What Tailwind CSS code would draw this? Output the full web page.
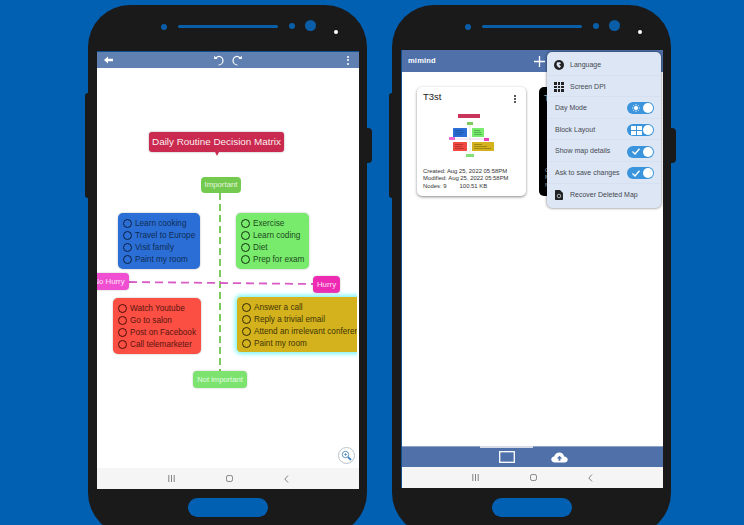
<!DOCTYPE html>
<html>
<head>
<meta charset="utf-8">
<script src="https://cdn.jsdelivr.net/npm/@tailwindcss/browser@4"></script>
</head>
<body class="m-0">
<div class="w-[744px] h-[525px] overflow-hidden bg-[#0260b3] flex items-start pl-[88px] gap-[25px] font-['Liberation_Sans',Arial,sans-serif]">

  <!-- Phone 1 -->
  <div class="relative w-[279px] h-[530px] mt-[5px] shrink-0 rounded-[42px] bg-[#1a1a1a] flex flex-col">
    <div class="absolute left-[-3px] top-[88px] w-[3px] h-[105px] bg-[#1a1a1a] rounded-l-sm"></div>
    <div class="absolute right-[-5px] top-[123px] w-[5px] h-[35px] bg-[#1a1a1a] rounded-r-sm"></div>
    <div class="h-[46px] relative shrink-0">
      <div class="absolute left-[73px] top-[19px] w-[6px] h-[6px] rounded-full bg-[#0a5ea8]"></div>
      <div class="absolute left-[90px] top-[20px] w-[100px] h-[3px] rounded-full bg-[#0a5ea8]"></div>
      <div class="absolute left-[201px] top-[18px] w-[6px] h-[6px] rounded-full bg-[#0a5ea8]"></div>
      <div class="absolute left-[217px] top-[15px] w-[11px] h-[11px] rounded-full bg-[#0a5ea8]"></div>
      <div class="absolute left-[246px] top-[25px] w-[4px] h-[4px] rounded-full bg-white"></div>
    </div>
    <div class="mx-[9px] w-[262px] h-[438px] shrink-0 bg-white flex flex-col overflow-hidden border-t border-[#0f4f8f]">
      <div class="relative h-[16px] shrink-0 bg-[#6080b2] flex items-center justify-between pl-[7px] pr-[10px]">
        <svg width="9" height="8" viewBox="0 0 9 8"><path d="M0 4 4 0.5V2.7H9V5.3H4V7.5Z" fill="#fff"/></svg>
        <div class="absolute left-[116px] top-[3px] flex gap-[8px]">
          <svg width="11" height="11" viewBox="0 0 11 11" fill="none" stroke="#fff" stroke-width="1.2"><path d="M3 3C6-.2 10 2 10 5.500C10 8 8 10 5.500 10"/><path d="M1.200 1V4.300H4.500" fill="#fff" stroke="none" transform="translate(0 -.2)"/></svg>
          <svg width="11" height="11" viewBox="0 0 11 11" fill="none" stroke="#fff" stroke-width="1.2"><path d="M8 3C5-.2 1 2 1 5.500C1 8 3 10 5.500 10"/><path d="M9.800 1V4.300H6.500" fill="#fff" stroke="none" transform="translate(0 -.2)"/></svg>
        </div>
        <div class="flex flex-col gap-[1.500px] items-center w-[2px]">
          <span class="w-[2px] h-[2px] rounded-full bg-white"></span><span class="w-[2px] h-[2px] rounded-full bg-white"></span><span class="w-[2px] h-[2px] rounded-full bg-white"></span>
        </div>
      </div>
      <div class="relative h-[400px] w-[260px] overflow-hidden shrink-0">
        <svg class="absolute left-0 top-0" width="260" height="400" fill="none">
          <path d="M123 125V303" stroke="#7cc95e" stroke-width="2" stroke-dasharray="7 4"/>
          <path d="M32 214L216 216" stroke="#d95cc6" stroke-width="1.800" stroke-dasharray="8 5"/>
        </svg>
        <div class="absolute left-[52px] top-[64px] w-[135px] h-[20px] rounded-[3px] bg-[#cb2a50] shadow-[0_0_2px_#0006] text-white/95 text-[9.900px] leading-[20px] text-center whitespace-nowrap">Daily Routine Decision Matrix</div>
        <div class="absolute left-[118px] top-[84px] w-0 h-0 border-x-[2px] border-x-transparent border-t-[4px] border-t-[#cb2a50]"></div>
        <div class="absolute left-[104px] top-[109px] w-[40px] h-[16px] rounded-[4px] bg-[#74c94f] text-white/80 text-[7.800px] leading-[16px] text-center">Important</div>
        <div class="absolute left-[96px] top-[303px] w-[54px] h-[17px] rounded-[4px] bg-[#7ce36f] shadow-[0_0_2px_#0004] text-white/80 text-[7.600px] leading-[17px] text-center whitespace-nowrap">Not important</div>
        <div class="absolute left-[-8px] top-[205px] w-[40px] h-[17px] rounded-[4px] bg-[#ef4fd0] shadow-[0_0_2px_#0004] text-white/85 text-[7.800px] leading-[17px] text-center whitespace-nowrap">No Hurry</div>
        <div class="absolute left-[216px] top-[208px] w-[27px] h-[17px] rounded-[4px] bg-[#ee2ab3] shadow-[0_0_2px_#0004] text-white/85 text-[7.800px] leading-[17px] text-center">Hurry</div>

        <div class="absolute left-[21px] top-[145px] w-[82px] h-[56px] rounded-[5px] bg-[#2b6fd6] shadow-[0_0_2px_#0005] pl-[5px] pt-[6px] flex flex-col gap-[3px] text-[8.200px] leading-[9px] text-[#0f2c55]">
          <div class="flex items-center gap-[3px] whitespace-nowrap"><span class="w-[9px] h-[9px] rounded-full border border-[#0b2142] shrink-0"></span>Learn cooking</div>
          <div class="flex items-center gap-[3px] whitespace-nowrap"><span class="w-[9px] h-[9px] rounded-full border border-[#0b2142] shrink-0"></span>Travel to Europe</div>
          <div class="flex items-center gap-[3px] whitespace-nowrap"><span class="w-[9px] h-[9px] rounded-full border border-[#0b2142] shrink-0"></span>Visit family</div>
          <div class="flex items-center gap-[3px] whitespace-nowrap"><span class="w-[9px] h-[9px] rounded-full border border-[#0b2142] shrink-0"></span>Paint my room</div>
        </div>
        <div class="absolute left-[139px] top-[145px] w-[73px] h-[56px] rounded-[5px] bg-[#78ea6c] shadow-[0_0_2px_#0005] pl-[5px] pt-[6px] flex flex-col gap-[3px] text-[8.200px] leading-[9px] text-[#1c4a1c]">
          <div class="flex items-center gap-[3px] whitespace-nowrap"><span class="w-[9px] h-[9px] rounded-full border border-[#103010] shrink-0"></span>Exercise</div>
          <div class="flex items-center gap-[3px] whitespace-nowrap"><span class="w-[9px] h-[9px] rounded-full border border-[#103010] shrink-0"></span>Learn coding</div>
          <div class="flex items-center gap-[3px] whitespace-nowrap"><span class="w-[9px] h-[9px] rounded-full border border-[#103010] shrink-0"></span>Diet</div>
          <div class="flex items-center gap-[3px] whitespace-nowrap"><span class="w-[9px] h-[9px] rounded-full border border-[#103010] shrink-0"></span>Prep for exam</div>
        </div>
        <div class="absolute left-[16px] top-[230px] w-[88px] h-[56px] rounded-[5px] bg-[#fb4f43] shadow-[0_0_2px_#0005] pl-[5px] pt-[6px] flex flex-col gap-[3px] text-[8.200px] leading-[9px] text-[#5a1410]">
          <div class="flex items-center gap-[3px] whitespace-nowrap"><span class="w-[9px] h-[9px] rounded-full border border-[#4a0c08] shrink-0"></span>Watch Youtube</div>
          <div class="flex items-center gap-[3px] whitespace-nowrap"><span class="w-[9px] h-[9px] rounded-full border border-[#4a0c08] shrink-0"></span>Go to salon</div>
          <div class="flex items-center gap-[3px] whitespace-nowrap"><span class="w-[9px] h-[9px] rounded-full border border-[#4a0c08] shrink-0"></span>Post on Facebook</div>
          <div class="flex items-center gap-[3px] whitespace-nowrap"><span class="w-[9px] h-[9px] rounded-full border border-[#4a0c08] shrink-0"></span>Call telemarketer</div>
        </div>
        <div class="absolute left-[140px] top-[229px] w-[135px] h-[55px] rounded-[4px] bg-[#d4b21e] shadow-[0_0_4px_2px_#7ff5f5] pl-[5px] pt-[6px] flex flex-col gap-[3px] text-[8.200px] leading-[9px] text-[#3f3505]">
          <div class="flex items-center gap-[3px] whitespace-nowrap"><span class="w-[9px] h-[9px] rounded-full border border-[#2e2604] shrink-0"></span>Answer a call</div>
          <div class="flex items-center gap-[3px] whitespace-nowrap"><span class="w-[9px] h-[9px] rounded-full border border-[#2e2604] shrink-0"></span>Reply a trivial email</div>
          <div class="flex items-center gap-[3px] whitespace-nowrap"><span class="w-[9px] h-[9px] rounded-full border border-[#2e2604] shrink-0"></span>Attend an irrelevant conference</div>
          <div class="flex items-center gap-[3px] whitespace-nowrap"><span class="w-[9px] h-[9px] rounded-full border border-[#2e2604] shrink-0"></span>Paint my room</div>
        </div>
      </div>
      <div class="absolute left-[250px] top-[442px] w-[17px] h-[17px] rounded-full border border-[#b9c3c9] bg-white flex items-center justify-center">
        <svg width="11" height="11" viewBox="0 0 11 11" fill="none"><circle cx="4.500" cy="4.500" r="3.200" stroke="#5f93bd" stroke-width="1"/><path d="M7 7 10 10" stroke="#3f86c2" stroke-width="1.800"/><path d="M3 4.500H6M4.500 3V6" stroke="#5f93bd" stroke-width=".8"/></svg>
      </div>
      <div class="h-[21px] shrink-0 bg-[#f5f5f5] flex items-center justify-center gap-[51px]">
        <svg width="7" height="7" viewBox="0 0 7 7" stroke="#777" stroke-width=".9"><path d="M.8 0V7M3.500 0V7M6.200 0V7"/></svg>
        <svg width="7" height="7" viewBox="0 0 7 7" fill="none" stroke="#777" stroke-width=".9"><rect x=".5" y=".5" width="6" height="6" rx="1.800"/></svg>
        <svg width="5" height="8" viewBox="0 0 5 8" fill="none" stroke="#777" stroke-width=".9"><path d="M4 .5.800 4 4 7.500"/></svg>
      </div>
    </div>
    <div class="flex-1 flex justify-center pt-[9px]">
      <div class="w-[80px] h-[19px] rounded-full bg-[#0260b3]"></div>
    </div>
  </div>

  <!-- Phone 2 -->
  <div class="relative w-[279px] h-[530px] mt-[5px] shrink-0 rounded-[42px] bg-[#1a1a1a] flex flex-col">
    <div class="absolute left-[-3px] top-[88px] w-[3px] h-[105px] bg-[#1a1a1a] rounded-l-sm"></div>
    <div class="absolute right-[-5px] top-[123px] w-[5px] h-[35px] bg-[#1a1a1a] rounded-r-sm"></div>
    <div class="h-[45px] relative shrink-0">
      <div class="absolute left-[73px] top-[19px] w-[6px] h-[6px] rounded-full bg-[#0a5ea8]"></div>
      <div class="absolute left-[90px] top-[20px] w-[100px] h-[3px] rounded-full bg-[#0a5ea8]"></div>
      <div class="absolute left-[201px] top-[18px] w-[6px] h-[6px] rounded-full bg-[#0a5ea8]"></div>
      <div class="absolute left-[217px] top-[15px] w-[11px] h-[11px] rounded-full bg-[#0a5ea8]"></div>
      <div class="absolute left-[246px] top-[25px] w-[4px] h-[4px] rounded-full bg-white"></div>
    </div>
    <div class="relative ml-[9px] w-[262px] h-[438px] shrink-0 bg-white flex flex-col overflow-hidden border-l border-[#0f4f8f]">
      <div class="h-[22px] shrink-0 bg-[#4f70a9] flex items-center justify-between pl-[6px] pr-[118px]">
        <span class="text-white text-[7.500px] font-bold tracking-[0.2px] leading-none lowercase">mimind</span>
        <svg width="11" height="11" viewBox="0 0 11 11" stroke="#fff" stroke-width="1.300"><path d="M5.500 0V11M0 5.500H11"/></svg>
      </div>
      <div class="flex-1 relative">
        <div class="flex gap-[13px] pl-[15px] pt-[15px] items-start">
          <div class="relative w-[109px] h-[109px] shrink-0 rounded-[5px] bg-white shadow-[0_1px_3px_#0007] px-[6px] pt-[4px]">
            <div class="text-[9.500px] leading-[12px] text-[#222]">T3st</div>
            <div class="absolute right-[10px] top-[8px] flex flex-col gap-[1px] w-[2px]">
              <span class="w-[2px] h-[2px] rounded-full bg-[#222]"></span><span class="w-[2px] h-[2px] rounded-full bg-[#222]"></span><span class="w-[2px] h-[2px] rounded-full bg-[#222]"></span>
            </div>
            <svg class="ml-[32px] mt-[11px] overflow-visible" width="46" height="44" viewBox="0 0 46 44">
              <rect x="3" y="0" width="22" height="4" fill="#c9345a"/>
              <rect x="12" y="8" width="6" height="3" fill="#7dcb5c"/>
              <path d="M15 11V40" stroke="#bde3ab" stroke-width=".5"/>
              <path d="M0 25H34" stroke="#e3a8da" stroke-width=".5"/>
              <rect x="-6" y="23" width="6" height="3" fill="#ea68cf"/>
              <rect x="29" y="24" width="5" height="3" fill="#ea40b8"/>
              <rect x="-2" y="14" width="14" height="9" rx=".5" fill="#2b6fd6"/>
              <rect x="17" y="14" width="12" height="9" rx=".5" fill="#78ea6c"/>
              <rect x="-2" y="28" width="14" height="9" rx=".5" fill="#f04a40"/>
              <rect x="17" y="28" width="22" height="9" rx=".5" fill="#d4b21e"/>
              <rect x="11" y="40" width="8" height="3" fill="#84df77"/>
              <path d="M0 16.500H8M0 18.500H9M0 20.500H7" stroke="#163f80" stroke-width=".5"/>
              <path d="M19 16.500H25M19 18.500H26M19 20.500H27" stroke="#2f7a2a" stroke-width=".5"/>
              <path d="M0 30.500H8M0 32.500H7M0 34.500H9" stroke="#8a1f18" stroke-width=".5"/>
              <path d="M19 30.500H27M19 32.500H32M19 34.500H36" stroke="#6d5a08" stroke-width=".5"/>
            </svg>
            <div class="mt-[10px] text-[5.900px] leading-[7.400px] text-[#333] whitespace-nowrap">
              <div>Created: Aug 25, 2022 05:58PM</div>
              <div>Modified: Aug 25, 2022 05:58PM</div>
              <div>Nodes: 9<span class="ml-[13px]">100.51 KB</span></div>
            </div>
          </div>
          <div class="relative w-[109px] h-[109px] shrink-0 rounded-[5px] bg-black pl-[6px] pt-[80px] text-[5.900px] leading-[7.400px] text-[#bbb] whitespace-nowrap overflow-hidden">
            <div class="absolute left-[5px] top-[6px] text-[9px] leading-[10px]">T</div>
            <div>C</div>
            <div>M</div>
            <div>N</div>
          </div>
        </div>
      </div>
      <div class="relative h-[21px] shrink-0 bg-[#4f70a9] border-t border-[#8fa3c4] flex items-center justify-center gap-[36px]">
        <div class="absolute left-[78px] top-[-1px] w-[53px] h-[2px] bg-[#d5dce8]"></div>
        <svg class="ml-[1px]" width="16" height="12" viewBox="0 0 16 12" fill="none" stroke="#fff" stroke-width="1.300"><rect x=".7" y=".7" width="14.600" height="10.600"/></svg>
        <svg width="17" height="11" viewBox="0 0 18 12"><path d="M4 11.500C1.500 11.500 0 10 0 8 0 6.200 1.400 5 3.200 4.800 4 2 6.200.5 8.800.5 11.500.5 13.500 2.300 14 4.800 16.300 5 18 6.200 18 8.300 18 10.300 16.500 11.500 14.500 11.500Z" fill="#fff"/><path d="M9 4 6 7H8V9.500H10V7H12Z" fill="#4f70a9"/></svg>
      </div>
      <div class="h-[21px] shrink-0 bg-[#f5f5f5] flex items-center justify-center gap-[51px]">
        <svg width="7" height="7" viewBox="0 0 7 7" stroke="#777" stroke-width=".9"><path d="M.8 0V7M3.500 0V7M6.200 0V7"/></svg>
        <svg width="7" height="7" viewBox="0 0 7 7" fill="none" stroke="#777" stroke-width=".9"><rect x=".5" y=".5" width="6" height="6" rx="1.800"/></svg>
        <svg width="5" height="8" viewBox="0 0 5 8" fill="none" stroke="#777" stroke-width=".9"><path d="M4 .5.800 4 4 7.500"/></svg>
      </div>
      <!-- Menu -->
      <div class="absolute left-[145px] top-[2px] w-[114px] h-[156px] rounded-[5px] bg-[#dce6f5] shadow-[0_0_3px_#0009] flex flex-col pt-[2px] text-[7px] text-[#45484f] divide-y divide-[#d6e0f0]">
        <div class="h-[21.600px] flex items-center pl-[7px] gap-[6px] pt-[1px]">
          <svg width="10" height="10" viewBox="0 0 10 10"><circle cx="5" cy="5" r="5" fill="#222"/><path d="M3 2.500C5 2 7 2.500 7 3.500L5 4.500 7 6.500 5.500 8 3.500 6.500 2.500 4.500Z" fill="#dce6f5"/></svg>
          <span>Language</span>
        </div>
        <div class="h-[21.600px] flex items-center pl-[7px] gap-[6px] pt-[2px]">
          <div class="grid grid-cols-3 gap-[1px] w-[10px] h-[10px]">
            <span class="bg-[#222]"></span><span class="bg-[#222]"></span><span class="bg-[#222]"></span><span class="bg-[#222]"></span><span class="bg-[#222]"></span><span class="bg-[#222]"></span><span class="bg-[#222]"></span><span class="bg-[#222]"></span><span class="bg-[#222]"></span>
          </div>
          <span>Screen DPI</span>
        </div>
        <div class="h-[21.600px] flex items-center justify-between pl-[8px] pr-[7px] pt-[2px]">
          <span>Day Mode</span>
          <div class="w-[27px] h-[12px] rounded-full bg-[#3b95dd] flex items-center justify-between pl-[5px] pr-[1px]">
            <svg width="8" height="8" viewBox="0 0 8 8" stroke="#fff" stroke-width=".8"><circle cx="4" cy="4" r="1.800" fill="#fff"/><path d="M4 0V1.200M4 6.800V8M0 4H1.200M6.800 4H8M1.200 1.200 2 2M6 6 6.800 6.800M1.200 6.800 2 6M6 2 6.800 1.200"/></svg>
            <span class="w-[10px] h-[10px] rounded-full bg-white"></span>
          </div>
        </div>
        <div class="h-[21.600px] flex items-center justify-between pl-[8px] pr-[7px] pt-[2px]">
          <span>Block Layout</span>
          <div class="w-[27px] h-[12px] rounded-full bg-[#3b95dd] flex items-center justify-between pl-[4px] pr-[1px]">
            <div class="grid grid-cols-2 gap-[1px] w-[11px] h-[9px]">
              <span class="bg-white"></span><span class="bg-white"></span><span class="bg-white"></span><span class="bg-white"></span>
            </div>
            <span class="w-[10px] h-[10px] rounded-full bg-white"></span>
          </div>
        </div>
        <div class="h-[21.600px] flex items-center justify-between pl-[8px] pr-[7px] pt-[2px]">
          <span>Show map details</span>
          <div class="w-[27px] h-[12px] rounded-full bg-[#3b95dd] flex items-center justify-between pl-[5px] pr-[1px]">
            <svg width="8" height="7" viewBox="0 0 8 7" fill="none" stroke="#fff" stroke-width="1.400"><path d="M.5 3.500 3 6 7.500 .8"/></svg>
            <span class="w-[10px] h-[10px] rounded-full bg-white"></span>
          </div>
        </div>
        <div class="h-[21.600px] flex items-center justify-between pl-[8px] pr-[7px] pt-[2px]">
          <span>Ask to save changes</span>
          <div class="w-[27px] h-[12px] rounded-full bg-[#3b95dd] flex items-center justify-between pl-[5px] pr-[1px]">
            <svg width="8" height="7" viewBox="0 0 8 7" fill="none" stroke="#fff" stroke-width="1.400"><path d="M.5 3.500 3 6 7.500 .8"/></svg>
            <span class="w-[10px] h-[10px] rounded-full bg-white"></span>
          </div>
        </div>
        <div class="h-[21.600px] flex items-center pl-[8px] gap-[7px] pt-[2px]">
          <svg width="8" height="10" viewBox="0 0 8 10"><path d="M0 1C0 .4.400 0 1 0H5L8 3V9C8 9.600 7.600 10 7 10H1C.4 10 0 9.600 0 9Z" fill="#222"/><circle cx="4" cy="6" r="1.800" fill="none" stroke="#dce6f5" stroke-width=".7"/></svg>
          <span>Recover Deleted Map</span>
        </div>
      </div>
    </div>
    <div class="flex-1 flex justify-center pt-[10px]">
      <div class="w-[80px] h-[19px] rounded-full bg-[#0260b3]"></div>
    </div>
  </div>
</div>
</body>
</html>
